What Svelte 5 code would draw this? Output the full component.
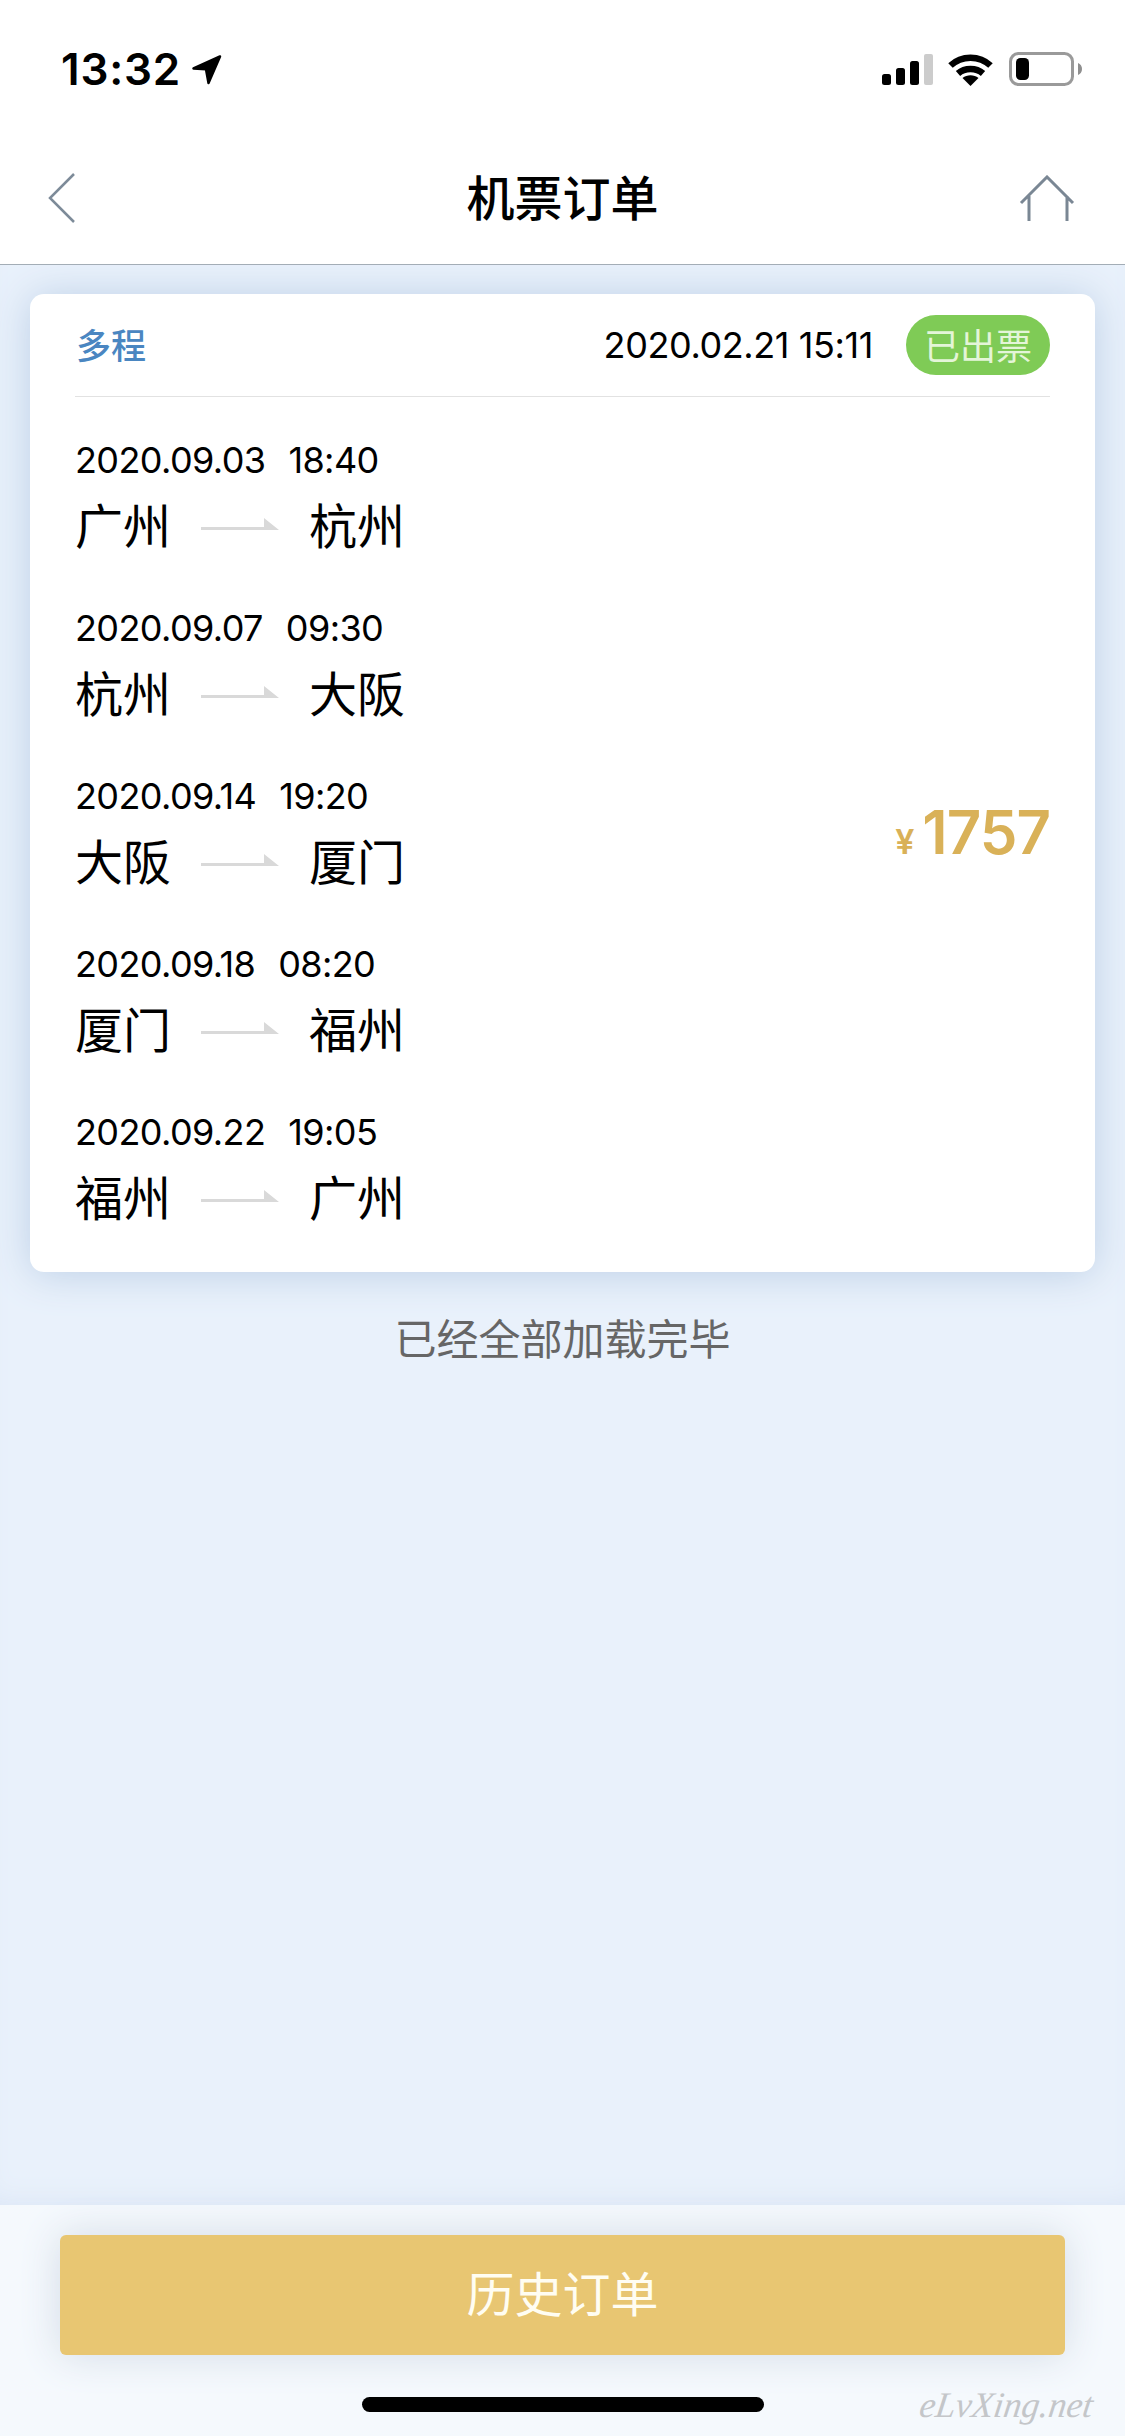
<script lang="ts">
  const legs = [
    { date: '2020.09.03', time: '18:40', from: '广州', to: '杭州' },
    { date: '2020.09.07', time: '09:30', from: '杭州', to: '大阪' },
    { date: '2020.09.14', time: '19:20', from: '大阪', to: '厦门' },
    { date: '2020.09.18', time: '08:20', from: '厦门', to: '福州' },
    { date: '2020.09.22', time: '19:05', from: '福州', to: '广州' }
  ];
</script>

<div class="page">
  <header class="top">
    <div class="status">
      <div class="clock">
        <span>13:32</span>
        <svg class="loc" width="31" height="31" viewBox="0 0 31 31"><path d="M29 2.500 2.500 14.500l12.500.8L17.500 29z" fill="#000" stroke="#000" stroke-width="2.500" stroke-linejoin="round"/></svg>
      </div>
      <div class="indicators">
        <svg width="51" height="31" viewBox="0 0 51 31">
          <rect x="0" y="20" width="9" height="11" rx="2.500" fill="#000"/>
          <rect x="14" y="14" width="9" height="17" rx="2.500" fill="#000"/>
          <rect x="28" y="7" width="9" height="24" rx="2.500" fill="#000"/>
          <rect x="42" y="0" width="9" height="31" rx="2" fill="#ccc"/>
        </svg>
        <svg class="wifi" width="45" height="33" viewBox="0 0 45 33" fill="none" stroke="#000" stroke-width="6.500">
          <path d="M2.500 12.500C13.500 2 31.500 2 42.500 12.500"/>
          <path d="M10 20.500c6.800-6 18.200-6 25 0"/>
          <path d="M22.500 33 14.500 25c4.500-3.600 11.500-3.600 16 0z" fill="#000" stroke="none"/>
        </svg>
        <svg class="battery" width="73" height="34" viewBox="0 0 73 34">
          <rect x="1.500" y="1.500" width="62" height="31" rx="8" fill="none" stroke="#9a9a9a" stroke-width="3"/>
          <rect x="7" y="6" width="13" height="22" rx="4.500" fill="#000"/>
          <path d="M69 11c2.500.8 4 3.200 4 6s-1.500 5.200-4 6z" fill="#8f8f8f"/>
        </svg>
      </div>
    </div>
    <nav class="nav">
      <svg class="back" width="28" height="52" viewBox="0 0 28 52" fill="none" stroke="#7d8b99" stroke-width="2.500"><path d="M26 2 2 26l24 24"/></svg>
      <h1>机票订单</h1>
      <svg class="house" width="56" height="46" viewBox="0 0 56 46" fill="none" stroke="#7a8794" stroke-width="3"><path d="M2 28 28 2l26 26M10 21v25M48 21v25"/></svg>
    </nav>
  </header>

  <main>
    <section class="card">
      <div class="card-head">
        <span class="kind">多程</span>
        <div class="meta">
          <span class="stamp">2020.02.21 15:11</span>
          <span class="badge">已出票</span>
        </div>
      </div>
      <div class="card-body">
        <ul class="legs">
          {#each legs as leg}
            <li>
              <div class="when"><span>{leg.date}</span><span>{leg.time}</span></div>
              <div class="route">
                <span>{leg.from}</span>
                <svg width="78" height="12" viewBox="0 0 78 12"><path d="M0 9h63V0l15 12H0z" fill="#d9d9d9"/></svg>
                <span>{leg.to}</span>
              </div>
            </li>
          {/each}
        </ul>
        <div class="price"><small>¥</small>1757</div>
      </div>
    </section>
    <p class="end">已经全部加载完毕</p>
  </main>

  <footer>
    <button type="button">历史订单</button>
  </footer>

  <div class="home-bar"></div>
  <div class="watermark">eLvXing.net</div>
</div>

<style>
  :global(body) {
    margin: 0;
    background: #e9f1fb;
  }

  .page {
    position: relative;
    display: flex;
    flex-direction: column;
    width: 1125px;
    height: 2436px;
    overflow: hidden;
    background: #e9f1fb;
    color: #000;
    font-family: "Inter", "Liberation Sans", "Noto Sans CJK SC", sans-serif;
  }

  .top {
    position: relative;
    z-index: 1;
    height: 264px;
    background: #fff;
    border-bottom: 1.500px solid #a3adb6;
  }

  .status {
    display: flex;
    justify-content: space-between;
    align-items: center;
    height: 34px;
    padding: 52px 43px 0 61px;
  }

  .clock {
    display: flex;
    align-items: center;
    gap: 10px;
    font-size: 44px;
    font-weight: 600;
    letter-spacing: 0.8px;
  }

  .indicators {
    display: flex;
    align-items: center;
    gap: 15px;
  }

  .wifi {
    margin-right: 1px;
  }

  .nav {
    display: grid;
    grid-template-columns: 1fr auto 1fr;
    align-items: center;
    height: 60px;
    margin-top: 82px;
    padding: 0 48px;
  }

  .house {
    justify-self: end;
    margin-right: 2px;
  }

  h1 {
    margin: 0;
    padding-bottom: 5px;
    font-family: "Noto Sans CJK SC", sans-serif;
    font-size: 48px;
    font-weight: 500;
    line-height: 55px;
  }

  main {
    flex: 1;
    padding: 29px 30px 0;
    box-shadow: inset 0 -18px 30px -18px #d9e4f5;
  }

  .card {
    background: #fff;
    border-radius: 14px;
    box-shadow: 0 2px 40px #bccfe6;
    padding: 0 45px;
  }

  .card-head {
    display: flex;
    justify-content: space-between;
    align-items: center;
    height: 102px;
    border-bottom: 1.500px solid #e2e2e2;
  }

  .kind {
    margin: 0 0 4px 1px;
    color: #4a86c1;
    font-family: "Noto Sans CJK SC", sans-serif;
    font-size: 35px;
    font-weight: 500;
  }

  .meta {
    display: flex;
    align-items: center;
    gap: 33px;
  }

  .stamp {
    font-size: 36px;
    letter-spacing: -0.4px;
  }

  .badge {
    display: block;
    width: 144px;
    height: 60px;
    border-radius: 30px;
    background: #7fcb56;
    color: #e4f5d8;
    font-family: "Noto Sans CJK SC", sans-serif;
    font-size: 36px;
    line-height: 58px;
    text-align: center;
  }

  .card-body {
    display: flex;
    justify-content: space-between;
    align-items: center;
    padding: 40px 0 34px;
  }

  .legs {
    margin: 0;
    padding: 0;
    list-style: none;
  }

  .legs li {
    height: 168px;
  }

  .legs li:last-child {
    height: 129px;
  }

  .when {
    display: flex;
    gap: 23px;
    font-size: 36px;
    letter-spacing: -0.6px;
    line-height: 46px;
  }

  .route {
    display: flex;
    align-items: center;
    margin-top: 7px;
    font-family: "Noto Sans CJK SC", sans-serif;
    font-size: 48px;
    line-height: 66px;
  }

  .route svg {
    margin: 2px 30px 0 30px;
  }

  .price {
    margin-bottom: 11px;
    color: #d9b158;
    font-size: 60px;
    font-weight: 600;
    letter-spacing: -1px;
  }

  .price small {
    margin-right: 9px;
    font-size: 34px;
    font-weight: 600;
  }

  .end {
    margin: 35px 0 0;
    color: #666;
    font-family: "Noto Sans CJK SC", sans-serif;
    font-size: 42px;
    line-height: 60px;
    text-align: center;
  }

  footer {
    height: 201px;
    padding: 30px 60px 0;
    background: #f5f9fd;
  }

  button {
    display: block;
    width: 1005px;
    height: 120px;
    padding: 0 0 8px;
    border: 0;
    border-radius: 6px;
    background: #e8c672;
    box-shadow: 0 0 40px #d3dbe6;
    color: #fffdf2;
    font-family: "Noto Sans CJK SC", sans-serif;
    font-size: 48px;
  }

  .home-bar {
    position: absolute;
    left: 362px;
    top: 2397px;
    width: 402px;
    height: 15px;
    border-radius: 8px;
    background: #000;
  }

  .watermark {
    position: absolute;
    left: 920px;
    top: 2384px;
    color: #c4c6c9;
    font-family: "Liberation Serif", serif;
    font-size: 36px;
    font-style: italic;
    transform: skewX(-8deg);
  }
</style>
